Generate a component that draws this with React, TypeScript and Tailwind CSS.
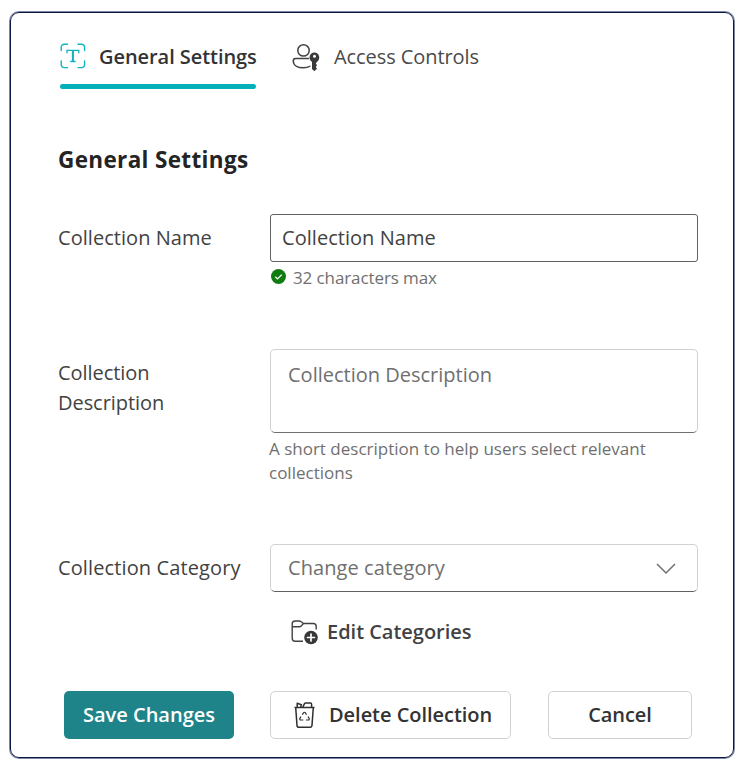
import type { ReactNode } from "react";

function ScanTextIcon() {
  return (
    <svg className="h-[26px] w-[26px] shrink-0" viewBox="0 0 26 26" fill="none" stroke="#12b3bd">
      <path strokeWidth="1.4" strokeLinecap="round" d="M1.2 7.5V4.2a3 3 0 0 1 3-3h3.3M18 1.2h3.6a3 3 0 0 1 3 3v3.3M24.6 18v3.6a3 3 0 0 1-3 3H18M7.5 24.6H4.2a3 3 0 0 1-3-3V18" />
      <path strokeWidth="1.3" d="M7 10.2V7.4h11.8v2.8M10.2 18.5h5.400" />
      <path strokeWidth="2.1" d="M12.9 7.4v11" />
    </svg>
  );
}

function PersonKeyIcon() {
  return (
    <svg className="h-[28px] w-[28px] shrink-0" viewBox="0 0 28 28" fill="none" stroke="#424242" strokeWidth="1.5">
      <circle cx="11.5" cy="7.4" r="5.700" />
      <path d="M17 15.600H3.600a2.300 2.300 0 0 0-2.300 2.300c0 4.400 4.300 6.900 10 6.900 2.800 0 5.200-.6 7-1.800" />
      <path fill="#3a3a3a" stroke="none" fillRule="evenodd" d="M22.500 9.600a5 5 0 0 0-2.500 9.300v7l2.300 2.300 2.700-2.500-1.200-1.700 1.200-1.700-1.200-1.700 1.300-1.900a5 5 0 0 0-2.600-9.100Zm0 2.100a1.500 1.500 0 1 1 0 3 1.500 1.500 0 0 1 0-3Z" />
    </svg>
  );
}

function FolderAddIcon() {
  return (
    <svg className="h-[26px] w-[27px] shrink-0" viewBox="0 0 27 26" fill="none" stroke="#424242" strokeWidth="1.4">
      <path d="M12 22.300H4.200a3 3 0 0 1-3-3V5a3 3 0 0 1 3-3h4c.8 0 1.400.3 2 .8L12.500 4.500h9.700a3 3 0 0 1 3 3v3M1.200 7.800h7.200c.7 0 1.300-.2 1.800-.7L12.500 4.500" />
      <circle cx="20" cy="18.500" r="6.800" fill="#383838" stroke="none" />
      <path stroke="#fff" strokeWidth="1.700" strokeLinecap="round" d="M20 15v7M16.500 18.500h7" />
    </svg>
  );
}

function RecycleBinIcon() {
  return (
    <svg className="h-[27px] w-[21px] shrink-0" viewBox="0 0 21 27" fill="none" stroke="#303030" strokeWidth="1.500" strokeLinejoin="round">
      <path d="M.5 5.500h20M1.700 5.500l1.300 17.900c.1 1.200.9 1.900 2 1.900h11c1.100 0 1.900-.7 2-1.900l1.300-17.900M3.200 5.300V1.200l4.200 1.500-.9 2.600M8.700 5.300l1.800-3.600c.3-.5.7-.7 1.200-.7h4.700c.7 0 1.200.5 1.200 1.200v3.100" />
      <path strokeWidth="1.200" d="m8.300 12.600 1.400-1.900c.4-.6 1.200-.6 1.600 0l1.200 1.900M14 14.600l1.100 1.800c.4.700 0 1.600-.8 1.600h-2.400M9.300 18H6.700c-.8 0-1.200-.9-.8-1.600L7 14.600" />
    </svg>
  );
}

function Row({ label, children }: { label: ReactNode; children: ReactNode }) {
  return (
    <div className="flex">
      <div className="w-[213px] shrink-0 pt-[9px] text-[20px] leading-[30px] text-[#424242]">{label}</div>
      <div className="w-[428px] shrink-0">{children}</div>
    </div>
  );
}

export default function App() {
  return (
    <div className="h-[770px] w-[743px] overflow-hidden bg-white pt-[12px] pl-[10px] font-['Open_Sans','Noto_Sans',sans-serif] whitespace-nowrap">
      <main className="h-[746px] w-[724px] rounded-[9px] border border-[#0b1742] pl-[46px] shadow-[0_0_0_1px_#8088a3]">
        <nav className="flex pt-[26px] pl-px">
          <button className="flex h-[50px] w-[197px] flex-col pl-[2px]">
            <span className="flex h-[36px] items-center gap-[13px] pt-px pb-[3px]">
              <ScanTextIcon />
              <span className="pt-[2px] text-[20px] leading-[30px] font-semibold tracking-[-0.06px] text-[#333]">General Settings</span>
            </span>
            <span className="mt-[9px] h-[5px] w-[196px] rounded-full bg-[#04b0b9]" />
          </button>
          <button className="ml-[37px] flex h-[36px] items-center gap-[14px] text-[20px] tracking-[-0.08px] text-[#4a4a4a]">
            <PersonKeyIcon />
            <span>Access Controls</span>
          </button>
        </nav>
        <h1 className="mt-[56px] pl-px text-[22.5px] leading-[30px] font-bold tracking-[0.35px] text-[#242424]">General Settings</h1>
        <div className="mt-[39px]">
          <Row label={<span className="pl-px tracking-[0.05px]">Collection Name</span>}>
            <div className="flex h-[48px] items-center rounded-[3px] border-[1.5px] border-[#616161] pl-[11px] text-[20px] tracking-[0.04px] text-[#424242]">Collection Name</div>
            <div className="mt-1 flex h-[24px] items-center gap-[7px] pl-px text-[17px] tracking-[-0.1px] text-[#707070]">
              <svg className="mb-[3px] h-[15px] w-[15px]" viewBox="0 0 15 15"><circle cx="7.500" cy="7.500" r="7.500" fill="#107c10" /><path d="m4.300 7.700 2.200 2.200 4.300-4.300" fill="none" stroke="#fff" strokeWidth="1.300" /></svg>
              <span>32 characters max</span>
            </div>
          </Row>
        </div>
        <div className="mt-[59px]">
          <Row label={<span className="block pl-px tracking-[-0.05px]">Collection<br />Description</span>}>
            <div className="h-[84px] rounded-[5px] border border-[#d1d1d1] border-b-[#707070] pt-[11px] pl-[17px] text-[20px] leading-[28px] text-[#707070]">Collection Description</div>
            <p className="mt-[4px] -ml-px text-[17px] leading-[24px] text-[#707070]">A short description to help users select relevant<br />collections</p>
          </Row>
        </div>
        <div className="mt-[59px]">
          <Row label={<span className="pl-px tracking-[0.12px]">Collection Category</span>}>
            <div className="flex h-[48px] items-center justify-between rounded-[5px] border border-[#d1d1d1] border-b-[#616161] pr-[21px] pl-[17px] text-[20px] text-[#707070]">
              <span className="tracking-[0.08px]">Change category</span>
              <svg className="mt-[2px] h-[12px] w-[20px]" viewBox="0 0 20 12" fill="none" stroke="#707070" strokeWidth="1.500"><path d="m1 1 9 9 9-9" /></svg>
            </div>
            <button className="mt-[25px] ml-[21px] flex h-[30px] items-center gap-[9px] text-[20px] font-semibold tracking-[-0.02px] text-[#424242]">
              <FolderAddIcon />
              <span>Edit Categories</span>
            </button>
          </Row>
        </div>
        <footer className="mt-[44px] flex pl-[7px] text-[20px] font-semibold text-[#333]">
          <button className="flex h-[48px] w-[170px] items-center justify-center rounded-[5px] bg-[#1e8489] text-white">Save Changes</button>
          <button className="ml-9 flex h-[48px] w-[241px] items-center gap-[14px] rounded-[5px] border border-[#d1d1d1] pl-[23px]">
            <RecycleBinIcon />
            <span className="tracking-[-0.04px]">Delete Collection</span>
          </button>
          <button className="ml-[37px] flex h-[48px] w-[144px] items-center justify-center rounded-[5px] border border-[#d1d1d1] tracking-[-0.1px]">Cancel</button>
        </footer>
      </main>
    </div>
  );
}
